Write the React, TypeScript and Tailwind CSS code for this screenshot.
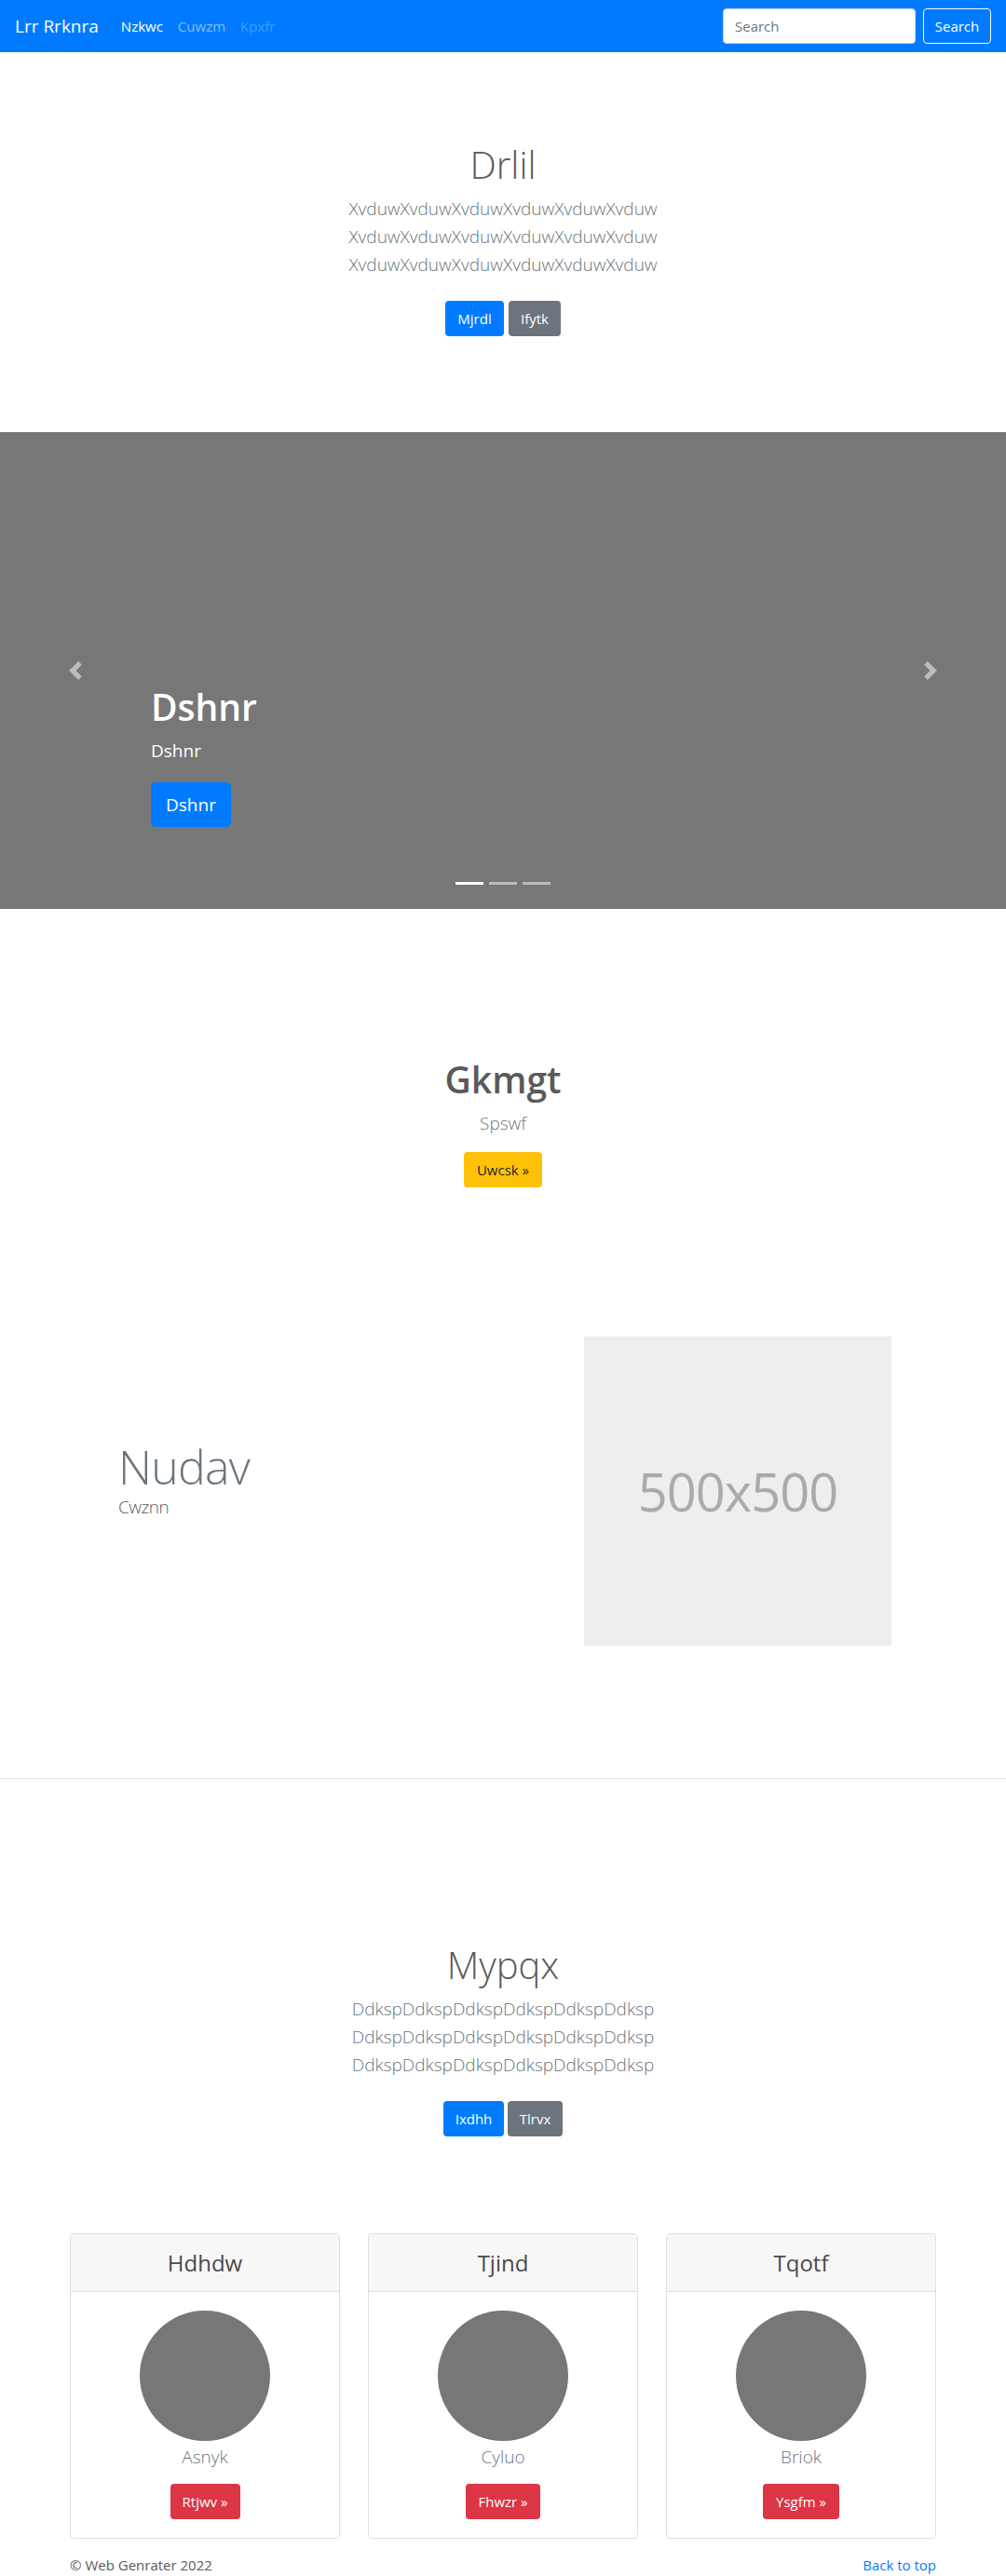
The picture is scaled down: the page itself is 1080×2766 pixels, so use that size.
import React from "react";

function Chevron({ dir }: { dir: "prev" | "next" }) {
  return (
    <svg width="20" height="20" viewBox="0 0 8 8" fill="#fff" className="opacity-50">
      {dir === "prev" ? (
        <path d="M5.25 0l-4 4 4 4 1.5-1.5L4.25 4l2.5-2.5L5.25 0z" />
      ) : (
        <path d="M2.75 0l-1.5 1.5L3.75 4l-2.5 2.5L2.75 8l4-4-4-4z" />
      )}
    </svg>
  );
}

function Card({ title, name, btn, btnW }: { title: string; name: string; btn: string; btnW: string }) {
  return (
    <div className="w-[290px] h-[328px] border border-[#dfdfdf] rounded-[4px] overflow-hidden flex flex-col">
      <div className="h-[62px] bg-[#f7f7f7] border-b border-[#dfdfdf] flex items-center justify-center">
        <h4 className="text-[24px] leading-[29px] text-[#4a4a4a] font-medium">{title}</h4>
      </div>
      <div className="flex-1 flex flex-col items-center pt-[20px]">
        <div className="w-[140px] h-[140px] rounded-full bg-[#777777]" />
        <p className="mt-[2px] text-[19px] leading-[30px] font-light text-[#6c757d]">{name}</p>
        <button className={`mt-[14px] h-[38px] ${btnW} rounded-[4px] bg-[#dc3545] text-white text-[15px]`}>{btn}</button>
      </div>
    </div>
  );
}

export default function App() {
  return (
    <div className="font-['Open_Sans',sans-serif] text-[#5a5a5a] bg-white">
      {/* Navbar */}
      <nav className="h-14 bg-[#007bff] flex items-center pl-4 pr-4">
        <span className="text-[19px] text-white mr-[16px]">Lrr Rrknra</span>
        <div className="flex text-[15px]">
          <span className="px-2 text-white">Nzkwc</span>
          <span className="px-2 text-[#80bdff]">Cuwzm</span>
          <span className="px-2 text-[#3f9cff]">Kpxfr</span>
        </div>
        <div className="ml-auto flex items-center">
          <input
            placeholder="Search"
            className="w-[207px] h-[38px] rounded-[4px] bg-white border border-[#ced4da] px-3 text-[15px] text-[#495057] placeholder:text-[#6c757d] outline-none"
          />
          <button className="ml-2 w-[73px] h-[38px] rounded-[4px] border border-[#f8f9fa] text-white text-[15px]">Search</button>
        </div>
      </nav>

      {/* Hero */}
      <section className="h-[408px] pt-[97px] flex flex-col items-center text-center">
        <h1 className="text-[40px] leading-[48px] font-light text-[#5a5a5a] mb-2">Drlil</h1>
        <p className="text-[19px] leading-[30px] font-light text-[#6c757d] mb-4">
          XvduwXvduwXvduwXvduwXvduwXvduw
          <br />
          XvduwXvduwXvduwXvduwXvduwXvduw
          <br />
          XvduwXvduwXvduwXvduwXvduwXvduw
        </p>
        <div className="flex gap-[5px] my-2">
          <button className="w-[63px] h-[38px] rounded-[4px] bg-[#007bff] text-white text-[15px]">Mjrdl</button>
          <button className="w-[56px] h-[38px] rounded-[4px] bg-[#6c757d] text-white text-[15px]">Ifytk</button>
        </div>
      </section>

      {/* Carousel */}
      <section className="relative h-[512px] bg-[#777777]">
        <div className="absolute left-0 top-0 bottom-0 w-[15%] flex items-center justify-center">
          <Chevron dir="prev" />
        </div>
        <div className="absolute right-0 top-0 bottom-0 w-[15%] flex items-center justify-center">
          <Chevron dir="next" />
        </div>
        <div className="absolute left-[162px] bottom-[88px] text-white">
          <h1 className="text-[39px] leading-[48px] font-semibold mb-2">Dshnr</h1>
          <p className="text-[19px] leading-[30px] mb-[19px]">Dshnr</p>
          <button className="w-[86px] h-[48px] rounded-[5px] bg-[#007bff] text-white text-[19px]">Dshnr</button>
        </div>
        <div className="absolute left-0 right-0 bottom-[26px] flex justify-center gap-[6px]">
          <span className="w-[30px] h-[3px] bg-white" />
          <span className="w-[30px] h-[3px] bg-white opacity-50" />
          <span className="w-[30px] h-[3px] bg-white opacity-50" />
        </div>
      </section>

      {/* Gkmgt */}
      <section className="pt-[159px] flex flex-col items-center text-center">
        <h2 className="text-[39px] leading-[48px] font-semibold text-[#5a5a5a] mb-2">Gkmgt</h2>
        <p className="text-[19px] leading-[30px] font-light text-[#6c757d] mb-4">Spswf</p>
        <button className="w-[84px] h-[38px] rounded-[4px] bg-[#ffc107] text-[#212529] text-[15px]">Uwcsk »</button>
      </section>

      {/* Featurette */}
      <section className="mt-[160px] flex items-center pl-[127px] pr-[123px]">
        <div className="flex-1 pb-[22px]">
          <h2 className="text-[50px] leading-[56px] font-light tracking-[-0.8px] text-[#6c757d]">Nudav</h2>
          <p className="text-[19px] leading-[30px] font-light text-[#5a5a5a] tracking-[-0.5px]">Cwznn</p>
        </div>
        <div className="w-[330px] h-[332px] bg-[#eeeeee] flex items-center justify-center">
          <span className="text-[56px] text-[#aaaaaa] tracking-[-1px]">500x500</span>
        </div>
      </section>

      <hr className="mt-[142px] border-t border-[#e5e5e5]" />

      {/* Mypqx */}
      <section className="pt-[176px] flex flex-col items-center text-center">
        <h1 className="text-[40px] leading-[48px] font-light text-[#5a5a5a] mb-2">Mypqx</h1>
        <p className="text-[19px] leading-[30px] font-light text-[#6c757d] mb-4">
          DdkspDdkspDdkspDdkspDdkspDdksp
          <br />
          DdkspDdkspDdkspDdkspDdkspDdksp
          <br />
          DdkspDdkspDdkspDdkspDdkspDdksp
        </p>
        <div className="flex gap-[4px] my-2">
          <button className="w-[65px] h-[38px] rounded-[4px] bg-[#007bff] text-white text-[15px]">Ixdhh</button>
          <button className="w-[59px] h-[38px] rounded-[4px] bg-[#6c757d] text-white text-[15px]">Tlrvx</button>
        </div>
      </section>

      {/* Cards */}
      <section className="mt-[96px] flex justify-between px-[75px]">
        <Card title="Hdhdw" name="Asnyk" btn="Rtjwv »" btnW="w-[75px]" />
        <Card title="Tjind" name="Cyluo" btn="Fhwzr »" btnW="w-[80px]" />
        <Card title="Tqotf" name="Briok" btn="Ysgfm »" btnW="w-[82px]" />
      </section>

      {/* Footer */}
      <footer className="mt-[17px] h-[23px] flex justify-between items-center px-[75px] text-[15px]">
        <span className="text-[#5a5a5a]">© Web Genrater 2022</span>
        <span className="text-[#007bff]">Back to top</span>
      </footer>
    </div>
  );
}
